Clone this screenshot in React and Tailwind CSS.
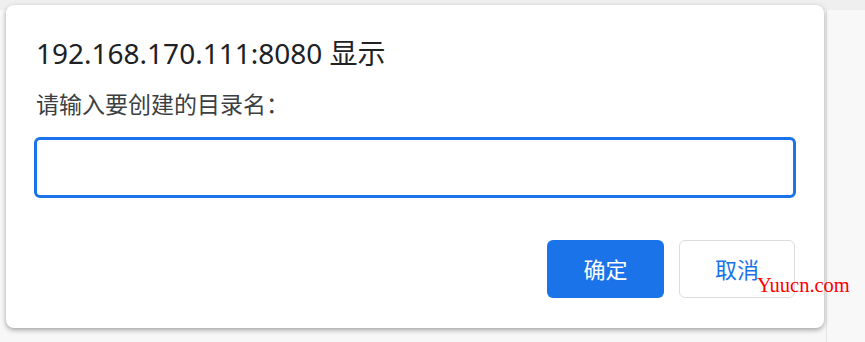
import React from "react";

export default function App() {
  return (
    <div
      className="relative w-[865px] h-[342px] overflow-hidden bg-[#f7f7f7]"
      style={{ fontFamily: '"Noto Sans", "Noto Sans CJK SC", sans-serif' }}
    >
      {/* 页面背景 */}
      <div className="h-[10px] bg-[#efefef]" />
      <div className="ml-[826px] h-[332px] border-l border-[#e4e4e4] bg-[#f8f8f8]" />

      {/* 对话框 */}
      <div className="absolute left-[6px] top-[5px] w-[818px] h-[323px] rounded-[8px] bg-white shadow-[0_2px_5px_rgba(0,0,0,0.35)] px-[28px] pt-[32px] pb-[29px] flex flex-col">
        <p className="text-[28px] leading-[33px] text-[#202124] pl-[2px]">192.168.170.111:8080 显示</p>
        <p className="mt-[19px] text-[23px] leading-[30px] text-[#3c4043] pl-[2px]">请输入要创建的目录名：</p>
        <input
          className="mt-[18px] h-[61px] w-full rounded-[6px] border-[3px] border-[#1a73e8] outline-none px-3 text-[20px]"
        />
        <div className="mt-[42px] flex justify-end gap-[15px] pr-[1px]">
          <button className="w-[117px] h-[58px] rounded-[6px] bg-[#1a73e8] text-white text-[22px]">确定</button>
          <button className="w-[116px] h-[58px] rounded-[6px] border border-[#dadce0] bg-white text-[#1a73e8] text-[22px]">取消</button>
        </div>
      </div>

      {/* 水印 */}
      <span
        className="absolute left-[757px] top-[274px] text-[20.5px] leading-[22px] text-[#ff0000]"
        style={{ fontFamily: '"Liberation Serif", serif' }}
      >
        Yuucn.com
      </span>
    </div>
  );
}
